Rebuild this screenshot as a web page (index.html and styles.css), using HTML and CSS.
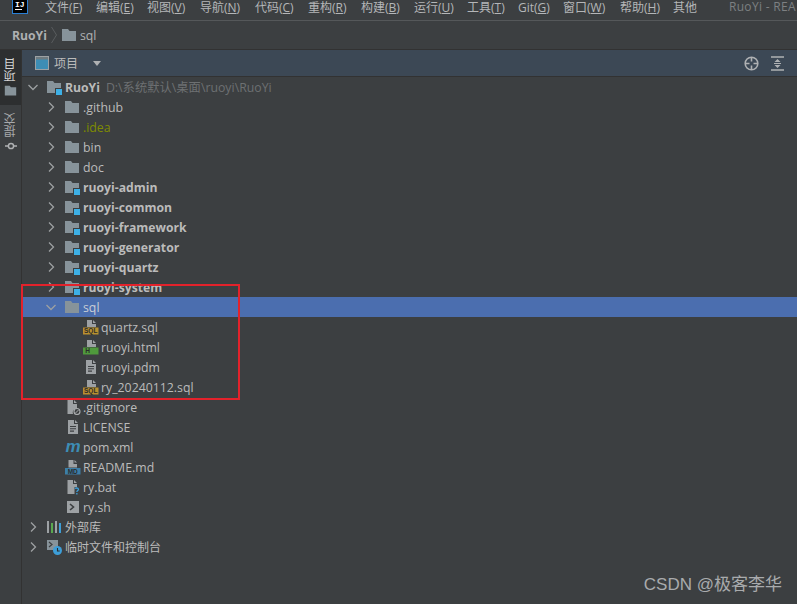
FILE: index.html
```html
<!DOCTYPE html>
<html lang="zh">
<head>
<meta charset="utf-8">
<title>RuoYi</title>
<link rel="stylesheet" href="styles.css">
</head>
<body>
<svg class="defs" width="0" height="0" aria-hidden="true">
  <symbol id="folder" viewBox="0 0 16 16"><path d="M1 2h6l1.500 2H15v10H1z" fill="#87939a"/></symbol>
  <symbol id="module" viewBox="0 0 16 16"><path d="M1 2h6l1.500 2H15v10H1z" fill="#87939a"/><rect x="9" y="9" width="7" height="7" fill="#3c3f41"/><rect x="10" y="10" width="6" height="6" fill="#3db0e6"/></symbol>
  <symbol id="right" viewBox="0 0 12 12"><path d="M4 1.500 8.500 6 4 10.500" fill="none" stroke="#9da0a2" stroke-width="1.300"/></symbol>
  <symbol id="down" viewBox="0 0 12 12"><path d="M1.500 4 6 8.500 10.500 4" fill="none" stroke="#9da0a2" stroke-width="1.300"/></symbol>
  <symbol id="sql" viewBox="0 0 16 16"><path d="M4 1h5v4h4v3H4zM10 1l3 3h-3z" fill="#9da1a4"/><rect y="8.500" width="15.500" height="7" fill="#b9902f"/></symbol>
  <symbol id="html" viewBox="0 0 16 16"><path d="M4 1h5v4h4v3H4zM10 1l3 3h-3z" fill="#9da1a4"/><rect y="8.500" width="15.500" height="7" fill="#4f9a3c"/></symbol>
  <symbol id="text" viewBox="0 0 16 16"><path d="M3 1h6v4h4v10H3zM10 1l3 3h-3z" fill="#9da1a4"/><path d="M5 7.500h6M5 9.800h6M5 12.100h4" stroke="#3c3f41" stroke-width="1.100"/></symbol>
  <symbol id="ignore" viewBox="0 0 16 16"><path d="M2.500 1h5.500v4h4v4.500a4 4 0 0 0-4 5.500H2.500zM9 1l3 3H9z" fill="#9da1a4"/><circle cx="12" cy="12.500" r="3" fill="none" stroke="#a8abad" stroke-width="1.100"/><path d="m10 14.500 4-4" stroke="#a8abad"/></symbol>
  <symbol id="md" viewBox="0 0 16 16"><path d="M3.500 1h5v4H12v3.500H3.500zM9.500 1 12 3.500H9.500z" fill="#9da1a4"/><rect y="9" width="15.500" height="6.500" fill="#3c7fa8"/></symbol>
  <symbol id="bat" viewBox="0 0 16 16"><path d="M2.500 1h5.500v4h4v3H9.500v7h-7zM9 1l3 3H9z" fill="#9da1a4"/><path d="M10.200 9.800c.3-1 2.900-1.300 3.300.3.300 1.300-1.700 1.500-1.700 3" fill="none" stroke="#3d9ed8" stroke-width="1.300"/><rect x="11.200" y="14" width="1.300" height="1.500" fill="#3d9ed8"/></symbol>
  <symbol id="shell" viewBox="0 0 16 16"><rect x="2" y="2" width="12" height="12" fill="#9da1a4"/><path d="m5 5 3.500 3L5 11" fill="none" stroke="#3c3f41" stroke-width="1.600"/></symbol>
  <symbol id="library" viewBox="0 0 16 16"><rect x="1" y="2" width="2" height="12" fill="#9da1a4"/><rect x="5" y="4" width="2" height="10" fill="#5aa84f"/><rect x="9" y="2" width="2" height="12" fill="#9da1a4"/><rect x="13" y="4" width="2" height="10" fill="#3d9ed8"/></symbol>
  <symbol id="scratch" viewBox="0 0 16 16"><rect x="1" y="1" width="11" height="10" fill="#87939a"/><path d="m3 3 3 2.500L3 8" fill="none" stroke="#3c3f41" stroke-width="1.200"/><circle cx="11.500" cy="11.500" r="4.500" fill="#3d9ed8"/><path d="M11.500 9v3h2.200" fill="none" stroke="#2b2b2b" stroke-width="1.100"/></symbol>
  <symbol id="window" viewBox="0 0 14 14"><rect x=".5" y=".5" width="13" height="13" fill="#3d8db5" stroke="#9da1a4"/><rect x="1" y="1" width="12" height="2.500" fill="#6e7a80"/></symbol>
  <symbol id="target" viewBox="0 0 15 15"><circle cx="7.500" cy="7.500" r="6.300" fill="none" stroke="#afb1b3" stroke-width="1.600"/><path d="M7.500 1v4.500M7.500 9.500V14M1 7.500h4.500M9.500 7.500H14" stroke="#afb1b3" stroke-width="1.600"/></symbol>
  <symbol id="collapse" viewBox="0 0 13 15"><path d="M0 1h13M0 14h13" stroke="#afb1b3" stroke-width="1.600"/><path d="M3.500 6 6.500 3l3 3zM3.500 9h6l-3 3z" fill="#afb1b3"/><path d="M3 7.500h7" stroke="#afb1b3"/></symbol>
  <symbol id="commit" viewBox="0 0 12 8"><circle cx="6" cy="4" r="2.600" fill="none" stroke="#afb1b3" stroke-width="1.500"/><path d="M0 4h3M9 4h3" stroke="#afb1b3" stroke-width="1.500"/></symbol>
</svg>

<header class="menubar">
  <div class="logo"><span class="logo-text">IJ</span><span class="logo-line"></span></div>
  <nav class="menu">
    <span class="menu-item">文件(<u>F</u>)</span>
    <span class="menu-item">编辑(<u>E</u>)</span>
    <span class="menu-item">视图(<u>V</u>)</span>
    <span class="menu-item">导航(<u>N</u>)</span>
    <span class="menu-item">代码(<u>C</u>)</span>
    <span class="menu-item">重构(<u>R</u>)</span>
    <span class="menu-item">构建(<u>B</u>)</span>
    <span class="menu-item">运行(<u>U</u>)</span>
    <span class="menu-item">工具(<u>T</u>)</span>
    <span class="menu-item">Git(<u>G</u>)</span>
    <span class="menu-item">窗口(<u>W</u>)</span>
    <span class="menu-item">帮助(<u>H</u>)</span>
    <span class="menu-item">其他</span>
  </nav>
  <span class="window-title">RuoYi - REA</span>
</header>

<div class="breadcrumb">
  <span class="crumb-root">RuoYi</span>
  <svg class="crumb-sep" width="6" height="18" viewBox="0 0 6 18"><path d="M.5 1 5.500 9 .5 17" fill="none" stroke="#5a5d5f"/></svg>
  <svg class="icon" width="16" height="16"><use href="#folder"/></svg>
  <span class="crumb-leaf">sql</span>
</div>

<div class="workspace">
  <aside class="sidebar">
    <div class="side-tab side-tab-active">
      <span class="side-label">项目</span>
      <svg class="icon" width="13" height="13"><use href="#folder"/></svg>
    </div>
    <div class="side-tab side-tab-commit">
      <span class="side-label side-label-dim">提交</span>
      <svg class="icon" width="12" height="8"><use href="#commit"/></svg>
    </div>
  </aside>

  <main class="panel">
    <div class="panel-head">
      <svg class="icon" width="14" height="14"><use href="#window"/></svg>
      <span class="panel-title">项目</span>
      <span class="panel-caret"></span>
      <span class="panel-tools">
        <svg class="icon" width="15" height="15"><use href="#target"/></svg>
        <svg class="icon" width="13" height="15"><use href="#collapse"/></svg>
      </span>
    </div>

    <div class="tree">
      <div class="row lv0"><svg class="chev" width="12" height="12"><use href="#down"/></svg><svg class="icon" width="16" height="16"><use href="#module"/></svg><b>RuoYi</b><span class="path">D:\系统默认\桌面\ruoyi\RuoYi</span></div>
      <div class="row lv1"><svg class="chev" width="12" height="12"><use href="#right"/></svg><svg class="icon" width="16" height="16"><use href="#folder"/></svg><span>.github</span></div>
      <div class="row lv1"><svg class="chev" width="12" height="12"><use href="#right"/></svg><svg class="icon" width="16" height="16"><use href="#folder"/></svg><span class="ignored">.idea</span></div>
      <div class="row lv1"><svg class="chev" width="12" height="12"><use href="#right"/></svg><svg class="icon" width="16" height="16"><use href="#folder"/></svg><span>bin</span></div>
      <div class="row lv1"><svg class="chev" width="12" height="12"><use href="#right"/></svg><svg class="icon" width="16" height="16"><use href="#folder"/></svg><span>doc</span></div>
      <div class="row lv1"><svg class="chev" width="12" height="12"><use href="#right"/></svg><svg class="icon" width="16" height="16"><use href="#module"/></svg><b>ruoyi-admin</b></div>
      <div class="row lv1"><svg class="chev" width="12" height="12"><use href="#right"/></svg><svg class="icon" width="16" height="16"><use href="#module"/></svg><b>ruoyi-common</b></div>
      <div class="row lv1"><svg class="chev" width="12" height="12"><use href="#right"/></svg><svg class="icon" width="16" height="16"><use href="#module"/></svg><b>ruoyi-framework</b></div>
      <div class="row lv1"><svg class="chev" width="12" height="12"><use href="#right"/></svg><svg class="icon" width="16" height="16"><use href="#module"/></svg><b>ruoyi-generator</b></div>
      <div class="row lv1"><svg class="chev" width="12" height="12"><use href="#right"/></svg><svg class="icon" width="16" height="16"><use href="#module"/></svg><b>ruoyi-quartz</b></div>
      <div class="row lv1"><svg class="chev" width="12" height="12"><use href="#right"/></svg><svg class="icon" width="16" height="16"><use href="#module"/></svg><b>ruoyi-system</b></div>
      <div class="row lv1 selected"><svg class="chev" width="12" height="12"><use href="#down"/></svg><svg class="icon" width="16" height="16"><use href="#folder"/></svg><span>sql</span></div>
      <div class="row file2"><svg class="icon" width="16" height="16" viewBox="0 0 16 16"><use href="#sql" width="16" height="16"/><text class="badge" x="7.700" y="14.400">SQL</text></svg><span>quartz.sql</span></div>
      <div class="row file2"><svg class="icon" width="16" height="16" viewBox="0 0 16 16"><use href="#html" width="16" height="16"/><text class="badge" x="4.500" y="14.400">H</text></svg><span>ruoyi.html</span></div>
      <div class="row file2"><svg class="icon" width="16" height="16"><use href="#text"/></svg><span>ruoyi.pdm</span></div>
      <div class="row file2"><svg class="icon" width="16" height="16" viewBox="0 0 16 16"><use href="#sql" width="16" height="16"/><text class="badge" x="7.700" y="14.400">SQL</text></svg><span>ry_20240112.sql</span></div>
      <div class="row file1"><svg class="icon" width="16" height="16"><use href="#ignore"/></svg><span>.gitignore</span></div>
      <div class="row file1"><svg class="icon" width="16" height="16"><use href="#text"/></svg><span>LICENSE</span></div>
      <div class="row file1"><svg class="icon" width="16" height="16" viewBox="0 0 16 16"><text class="maven-m" x="8" y="13">m</text></svg><span>pom.xml</span></div>
      <div class="row file1"><svg class="icon" width="16" height="16" viewBox="0 0 16 16"><use href="#md" width="16" height="16"/><text class="badge" x="7.700" y="14.600">MD</text></svg><span>README.md</span></div>
      <div class="row file1"><svg class="icon" width="16" height="16"><use href="#bat"/></svg><span>ry.bat</span></div>
      <div class="row file1"><svg class="icon" width="16" height="16"><use href="#shell"/></svg><span>ry.sh</span></div>
      <div class="row lv0"><svg class="chev" width="12" height="12"><use href="#right"/></svg><svg class="icon" width="16" height="16"><use href="#library"/></svg><span class="cjk">外部库</span></div>
      <div class="row lv0"><svg class="chev" width="12" height="12"><use href="#right"/></svg><svg class="icon" width="16" height="16"><use href="#scratch"/></svg><span class="cjk">临时文件和控制台</span></div>
    </div>
  </main>
</div>

<div class="highlight"></div>
<div class="watermark">CSDN @极客李华</div>
</body>
</html>
```
FILE: styles.css
```css
* { box-sizing: border-box; }
html, body { margin: 0; height: 100%; overflow: hidden; }
body {
  position: relative;
  width: 797px;
  height: 604px;
  background: #3c3f41;
  color: #bbbbbb;
  font: 12.300px/20px "Open Sans", "Noto Sans CJK SC", sans-serif;
}
.defs { position: absolute; }
.icon, .chev { display: block; flex: none; }
.badge {
  font: 700 6.500px "Liberation Sans", sans-serif;
  fill: #2b2b2b;
  text-anchor: middle;
}
.maven-m {
  font: italic 700 17px "Liberation Sans", sans-serif;
  fill: #3d8db5;
  text-anchor: middle;
}

.menubar {
  display: flex;
  align-items: center;
  height: 21px;
  border-bottom: 1px solid #55585a;
  font-size: 12px;
  white-space: nowrap;
  overflow: hidden;
}
.logo {
  flex: none;
  position: relative;
  width: 16px;
  height: 14px;
  margin: -7px 0 0 12px;
  background: #000;
  border: 1px solid #2a7fd4;
  border-top: 0;
}
.logo-text { display: block; color: #fff; font: bold 8px/9px "Liberation Mono", monospace; padding-left: 2px; }
.logo-line { display: block; width: 7px; height: 1px; margin-left: 2px; background: #fff; }
.menu { display: flex; margin-left: 17px; transform: translateY(-2px); }
.menu-item { width: 53px; flex: none; color: #b4b6b8; }
.menu-item:nth-child(1), .menu-item:nth-child(2) { width: 51px; }
.menu-item:nth-child(4) { width: 55px; }
.menu-item:nth-child(9) { width: 51px; }
.menu-item:nth-child(10) { width: 45px; }
.menu-item:nth-child(11) { width: 57px; }
.window-title { margin-left: 3px; color: #7d8082; letter-spacing: .3px; transform: translateY(-3px); }

.breadcrumb {
  display: flex;
  align-items: center;
  height: 29px;
  padding-left: 12px;
  gap: 4px;
  border-bottom: 1px solid #323232;
}
.crumb-root { font-weight: 700; color: #aeb0b2; font-size: 12.200px; margin-top: 2px; }
.crumb-sep { flex: none; }
.crumb-leaf { color: #aeb0b2; margin: 2px 0 0 -1px; }

.workspace { display: flex; height: 554px; }
.sidebar { width: 22px; flex: none; border-right: 1px solid #323232; background: #3c3f41; }
.side-tab { display: flex; flex-direction: column; align-items: center; gap: 2px; padding: 8px 0 0; }
.side-tab-active { height: 55px; background: #2d2f30; }
.side-tab-commit { gap: 5px; }
.side-label {
  writing-mode: vertical-rl;
  transform: rotate(180deg);
  font-size: 12px;
  line-height: 12px;
  color: #d6d6d6;
}
.side-label-dim { color: #a8aaac; }

.panel { flex: 1; min-width: 0; }
.panel-head {
  display: flex;
  align-items: center;
  height: 27px;
  padding: 0 13px 0 13px;
  background: #3c4855;
  border-bottom: 1px solid #323232;
}
.panel-title { margin: 2px 0 0 5px; color: #bbbbbb; font-size: 12px; }
.panel-caret {
  margin-left: 15px;
  width: 0;
  height: 0;
  border: 4px solid transparent;
  border-top: 5px solid #afb1b3;
  border-bottom: 0;
}
.panel-tools { display: flex; gap: 12px; margin-left: auto; align-items: center; }

.tree { display: flex; flex-direction: column; }
.row { display: flex; align-items: center; height: 20px; white-space: nowrap; color: #bbbbbb; }
.row b { font-weight: 700; margin: 2px 0 0 3px; color: #bbbbbb; font-size: 12.200px; }
.row > span { margin: 2px 0 0 3px; }
.row > .cjk { font-size: 12px; }
.chev { margin-right: 7px; }
.lv0 { padding-left: 5px; }
.lv1 { padding-left: 23px; }
.file2 { padding-left: 61px; }
.file1 { padding-left: 43px; }
.file1 > span, .file2 > span { margin-left: 2px; }
.row > .path { color: #6d7072; margin-left: 6px; }
.ignored { color: #7f8c00; }
.selected { background: #4b6eaf; }
.selected span { color: #c8cdd6; }

.highlight {
  position: absolute;
  left: 21px;
  top: 284px;
  width: 219px;
  height: 116px;
  border: 2px solid #e3222b;
  pointer-events: none;
}
.watermark {
  position: absolute;
  right: 15px;
  bottom: 9px;
  font: 17px/20px "Liberation Sans", "Noto Sans CJK SC", sans-serif;
  color: #a9abad;
}
```
